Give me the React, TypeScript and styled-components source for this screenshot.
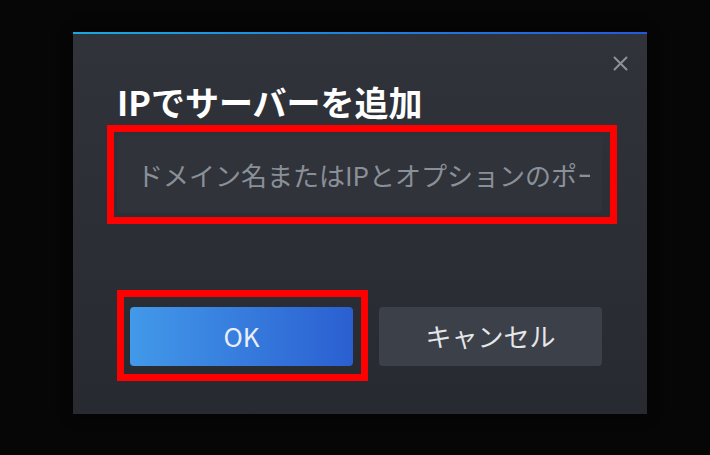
import React from "react";
import styled, { createGlobalStyle } from "styled-components";

const Global = createGlobalStyle`
  html, body { margin: 0; padding: 0; background: #060606; }
  body { font-family: "Noto Sans CJK JP", "Noto Sans", sans-serif; }
  * { box-sizing: border-box; }
`;

const Screen = styled.div`
  width: 710px;
  height: 455px;
  display: flex;
  align-items: flex-start;
  padding: 32px 0 0 73px;
  background: #060606;
`;

const Dialog = styled.div`
  position: relative;
  width: 574px;
  height: 382px;
  display: flex;
  flex-direction: column;
  padding: 0 44px 48px 44px;
  background: linear-gradient(180deg, #30333a 0%, #272a31 100%);
  box-shadow: 0 0 12px rgba(0, 0, 0, 0.6);
  &::before {
    content: "";
    display: block;
    height: 2px;
    margin: 0 -44px;
    background: linear-gradient(90deg, #1aa8e0 0%, #2459dc 100%);
  }
`;

const Header = styled.div`
  height: 48px;
  display: flex;
  justify-content: flex-end;
  align-items: flex-start;
  margin-right: -29px;
`;

const CloseButton = styled.button`
  width: 24px;
  height: 24px;
  margin-top: 17px;
  padding: 0;
  border: none;
  background: transparent;
  display: flex;
  align-items: center;
  justify-content: center;
  color: #8c929b;
  cursor: pointer;
`;

const Title = styled.h1`
  margin: 0;
  font-size: 34px;
  line-height: 40px;
  font-weight: 700;
  color: #ffffff;
  letter-spacing: 0;
`;

const Field = styled.input`
  margin-top: 13px;
  width: 485px;
  height: 78px;
  padding: 0 12px 0 20px;
  border: none;
  border-radius: 4px;
  background: #30333a;
  font-family: inherit;
  font-size: 26px;
  color: #e0e2e6;
  outline: none;
  &::placeholder {
    color: #8a9098;
    opacity: 1;
  }
`;

const ButtonRow = styled.div`
  margin-top: auto;
  display: flex;
  gap: 26px;
  padding-left: 13px;
`;

const Button = styled.button<{ $primary?: boolean }>`
  width: 223px;
  height: 59px;
  border: none;
  border-radius: 4px;
  padding: 0 0 3px;
  font-family: inherit;
  font-size: 26px;
  color: ${(p) => (p.$primary ? "#e9eef8" : "#e4e6ea")};
  background: ${(p) =>
    p.$primary
      ? "linear-gradient(90deg, #4299e9 0%, #2b5fd1 100%)"
      : "#3c4049"};
  cursor: pointer;
`;

const Highlight = styled.div<{ $x: number; $y: number; $w: number; $h: number }>`
  position: absolute;
  left: ${(p) => p.$x}px;
  top: ${(p) => p.$y}px;
  width: ${(p) => p.$w}px;
  height: ${(p) => p.$h}px;
  border: 7px solid #ff0000;
  pointer-events: none;
`;

const CloseIcon = () => (
  <svg width="15" height="15" viewBox="0 0 15 15" fill="none">
    <path d="M1.5 1.5L13.5 13.5M13.5 1.5L1.5 13.5" stroke="currentColor" strokeWidth="2" strokeLinecap="round" />
  </svg>
);

export default function App() {
  return (
    <>
      <Global />
      <Screen>
        <Dialog>
          <Header>
            <CloseButton aria-label="close">
              <CloseIcon />
            </CloseButton>
          </Header>
          <Title>IPでサーバーを追加</Title>
          <Field placeholder="ドメイン名またはIPとオプションのポート" />
          <ButtonRow>
            <Button $primary>OK</Button>
            <Button>キャンセル</Button>
          </ButtonRow>
          <Highlight $x={34} $y={93} $w={510} $h={99} />
          <Highlight $x={44} $y={258} $w={251} $h={91} />
        </Dialog>
      </Screen>
    </>
  );
}
